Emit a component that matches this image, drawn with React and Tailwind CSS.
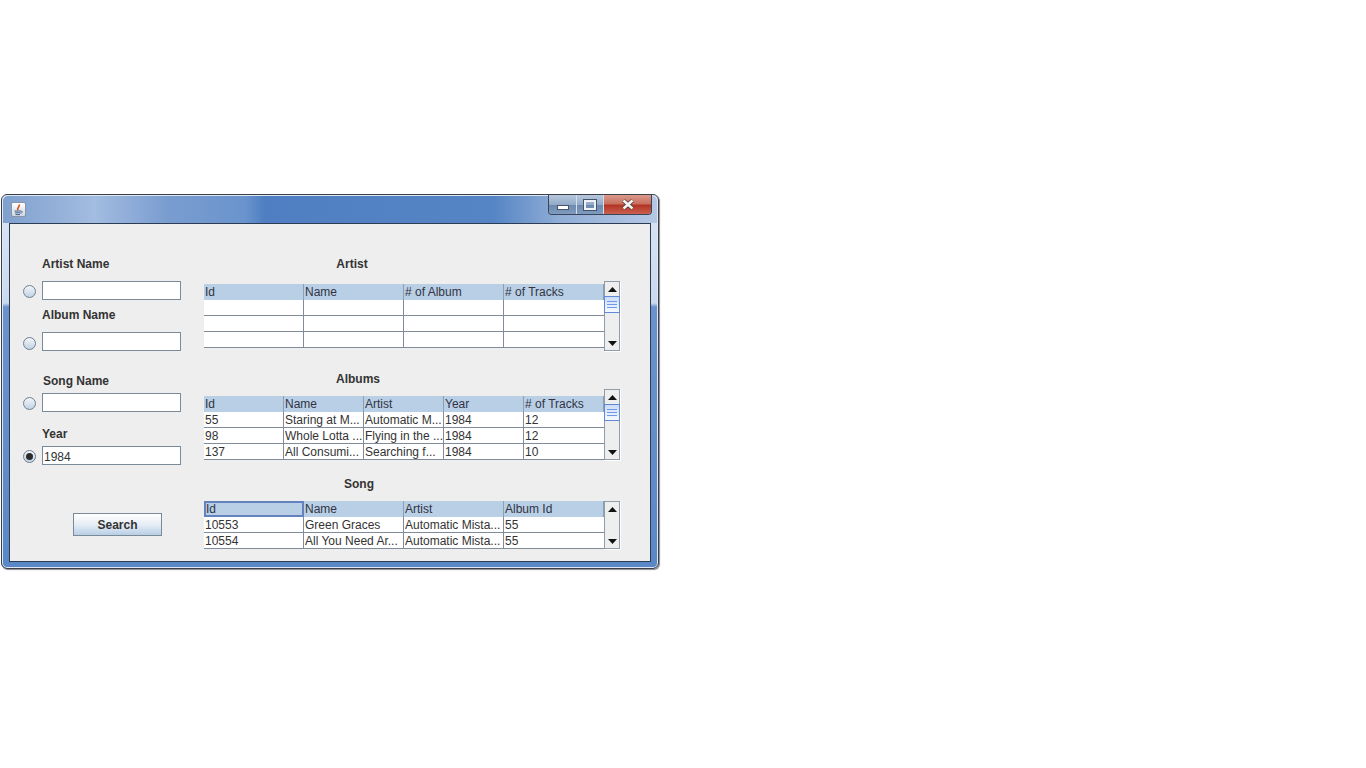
import React from 'react';

const Radio = ({ checked, className = '' }) => (
  <div className={`w-[13px] h-[13px] rounded-full border border-[#6d7f92] bg-gradient-to-b from-[#f2f5f8] to-[#c3d2e3] flex items-center justify-center shrink-0 ${className}`}>
    {checked && <div className="w-[7px] h-[7px] rounded-full bg-[#2b2b2b]" />}
  </div>
);

const Field = ({ label, value, checked, labelClass = '', className = '', inputClass = 'mt-[9px]', radioClass = 'mt-[4px]' }) => (
  <div className={className}>
    <div className={`h-[16px] leading-[16px] pl-[19px] font-bold text-[12px] ${labelClass}`}>{label}</div>
    <div className={`flex items-start gap-[6px] ${inputClass}`}>
      <Radio checked={checked} className={radioClass} />
      <div className="w-[139px] h-[19px] border border-[#7a8a99] bg-white pl-[1px] leading-[20px] text-[12px]">{value}</div>
    </div>
  </div>
);

const Arrow = ({ up }) => (
  <div className="h-[14px] flex items-center justify-center">
    <svg width="9" height="5" viewBox="0 0 9 5">
      <path d={up ? 'M4.5 0L9 5H0Z' : 'M0 0H9L4.5 5Z'} fill="#111" />
    </svg>
  </div>
);

const Scrollbar = ({ thumb, height }) => (
  <div className="w-[16px] border border-[#8f9caa] bg-[#eeeeee] flex flex-col justify-between relative shrink-0 shadow-[1px_1px_0_#ffffff]" style={{ height }}>
    <Arrow up />
    {thumb && (
      <div className="absolute left-[-1px] right-[-1px] top-[14px] h-[17px] border border-[#6288d8] bg-gradient-to-b from-[#cbdcf8] to-[#f6f9fe] flex flex-col items-center justify-center gap-[2px]">
        <div className="w-[10px] h-[1px] bg-[#6f97e6]" />
        <div className="w-[10px] h-[1px] bg-[#6f97e6]" />
        <div className="w-[10px] h-[1px] bg-[#6f97e6]" />
      </div>
    )}
    <Arrow />
  </div>
);

const Table = ({ columns, rows, colClass, focused }) => (
  <div className="w-[400px]">
    <div className="flex h-[16px] bg-[#b8cfe5]">
      {columns.map((col, i) => (
        <div
          key={col}
          className={`${colClass} text-[12px] text-[#333344] ${
            focused && i === 0 ? 'border-2 border-[#6382bf] leading-[12px]' : 'leading-[16px] pl-[1px] border-r border-[#8aa0b5]'
          }`}
        >
          {col}
        </div>
      ))}
    </div>
    {rows.map((row, r) => (
      <div key={r} className="flex h-[16px] bg-white border-b border-[#808c99]">
        {row.map((cell, i) => (
          <div key={i} className={`${colClass} leading-[16px] pl-[1px] text-[12px] whitespace-nowrap overflow-hidden border-r border-[#808c99] last:border-r-0`}>
            {cell}
          </div>
        ))}
      </div>
    ))}
  </div>
);

export default function App() {
  return (
    <div className="w-full h-screen bg-white pt-[194px] pl-[1px] overflow-hidden font-['Liberation_Sans',Arial,sans-serif] text-[#333333]">
      {/* window frame */}
      <div className="w-[658px] h-[375px] rounded-[6px] border border-[#3a3f48] shadow-[1px_1px_1px_#8a8a8a,inset_0_0_0_1px_#dfe8f4] bg-[linear-gradient(to_bottom,#dbe6f4_0%,#c9d9ee_29%,#6a93cd_30%,#5a88c6_100%)] px-[7px] flex flex-col relative">
        <div className="absolute inset-x-[1px] top-[1px] h-[27px] rounded-t-[5px] bg-[linear-gradient(to_right,#7fa0cf_0%,#a3bce0_14%,#7a9dd0_25%,#6a94cd_37%,#4f7fc2_40%,#5585c4_75%,#8fadd6_85%,#b5c8e4_100%)]" />
        <div className="h-[28px] flex items-center justify-between relative">
          <div className="w-[15px] h-[15px] rounded-[2px] border border-[#8a95a5] bg-gradient-to-b from-white to-[#cfd8e3] flex items-center justify-center mt-[1px] ml-[2px]">
            <svg width="11" height="12" viewBox="0 0 11 12" fill="none">
              <path d="M6 0.5C7.5 2.5 3.5 3.5 5 6.2" stroke="#d9541e" strokeWidth="1.6" />
              <path d="M1.5 7H8M2 8.8H7.5M2.5 10.6H7" stroke="#3f5f8a" strokeWidth="1" />
              <path d="M8 7.2C10 6.8 10 9 7.5 9.2" stroke="#3f5f8a" strokeWidth="0.8" />
            </svg>
          </div>
          <div className="flex h-[20px] self-start rounded-b-[4px] border border-t-0 border-[#39465a] overflow-hidden mr-[-1px]">
            <div className="w-[28px] border-r border-[#d5deea] bg-[linear-gradient(to_bottom,#b7c8dd_0%,#93abc8_50%,#6d8ab0_55%,#7f9bbd_100%)] flex items-center justify-center">
              <div className="w-[12px] h-[5px] mt-[6px] bg-white border border-[#44546a]" />
            </div>
            <div className="w-[27px] border-r border-[#d5deea] bg-[linear-gradient(to_bottom,#b7c8dd_0%,#93abc8_50%,#6d8ab0_55%,#7f9bbd_100%)] flex items-center justify-center">
              <div className="w-[12px] h-[10px] border-2 border-[#eef2f7] outline outline-1 outline-[#44546a]" />
            </div>
            <div className="w-[47px] bg-[linear-gradient(to_bottom,#dc9a8e_0%,#c9705f_45%,#b43525_55%,#c9604f_100%)] flex items-center justify-center">
              <svg width="14" height="11" viewBox="0 0 14 11">
                <path d="M2.5 1.5L11.5 9.5M11.5 1.5L2.5 9.5" stroke="#4a3330" strokeWidth="4" />
                <path d="M2.5 1.5L11.5 9.5M11.5 1.5L2.5 9.5" stroke="#f4f4f4" strokeWidth="2.6" />
              </svg>
            </div>
          </div>
        </div>

        {/* content pane */}
        <div className="w-[642px] h-[339px] border border-[#2d3c55] bg-[#eeeeee] flex relative">
          <div className="w-[194px] pl-[13px] pt-[32px] shrink-0">
            <Field label="Artist Name" />
            <Field label="Album Name" className="mt-[7px]" radioClass="mt-[5px]" />
            <Field label="Song Name" labelClass="pl-[20px]" className="mt-[22px]" inputClass="mt-[4px]" />
            <Field label="Year" value="1984" checked className="mt-[14px]" inputClass="mt-[4px]" />
            <button className="block w-[89px] h-[23px] ml-[50px] mt-[48px] border border-[#7a8a99] bg-gradient-to-b from-white via-[#e6edf5] to-[#b8cfe5] font-bold text-[12px] text-[#333333]">
              Search
            </button>
          </div>

          <div className="pt-[32px]">
            <div className="h-[16px] leading-[16px] w-[296px] text-center font-bold text-[12px]">Artist</div>
            <div className="flex items-start mt-[9px]">
              <div className="mt-[3px]">
                <Table columns={['Id', 'Name', '# of Album', '# of Tracks']} rows={[['', '', '', ''], ['', '', '', ''], ['', '', '', '']]} colClass="w-[100px] h-full" />
              </div>
              <Scrollbar thumb height={70} />
            </div>

            <div className="h-[16px] leading-[16px] w-[308px] text-center font-bold text-[12px] mt-[20px]">Albums</div>
            <div className="flex items-start mt-[2px]">
              <div className="mt-[7px]">
                <Table
                  columns={['Id', 'Name', 'Artist', 'Year', '# of Tracks']}
                  rows={[
                    ['55', 'Staring at M...', 'Automatic M...', '1984', '12'],
                    ['98', 'Whole Lotta ...', 'Flying in the ...', '1984', '12'],
                    ['137', 'All Consumi...', 'Searching f...', '1984', '10'],
                  ]}
                  colClass="w-[80px] h-full"
                />
              </div>
              <Scrollbar thumb height={71} />
            </div>

            <div className="h-[16px] leading-[16px] w-[310px] text-center font-bold text-[12px] mt-[16px]">Song</div>
            <div className="flex items-start mt-[9px]">
              <Table
                columns={['Id', 'Name', 'Artist', 'Album Id']}
                rows={[
                  ['10553', 'Green Graces', 'Automatic Mista...', '55'],
                  ['10554', 'All You Need Ar...', 'Automatic Mista...', '55'],
                ]}
                colClass="w-[100px] h-full"
                focused
              />
              <Scrollbar height={48} />
            </div>
          </div>
        </div>
      </div>
    </div>
  );
}
